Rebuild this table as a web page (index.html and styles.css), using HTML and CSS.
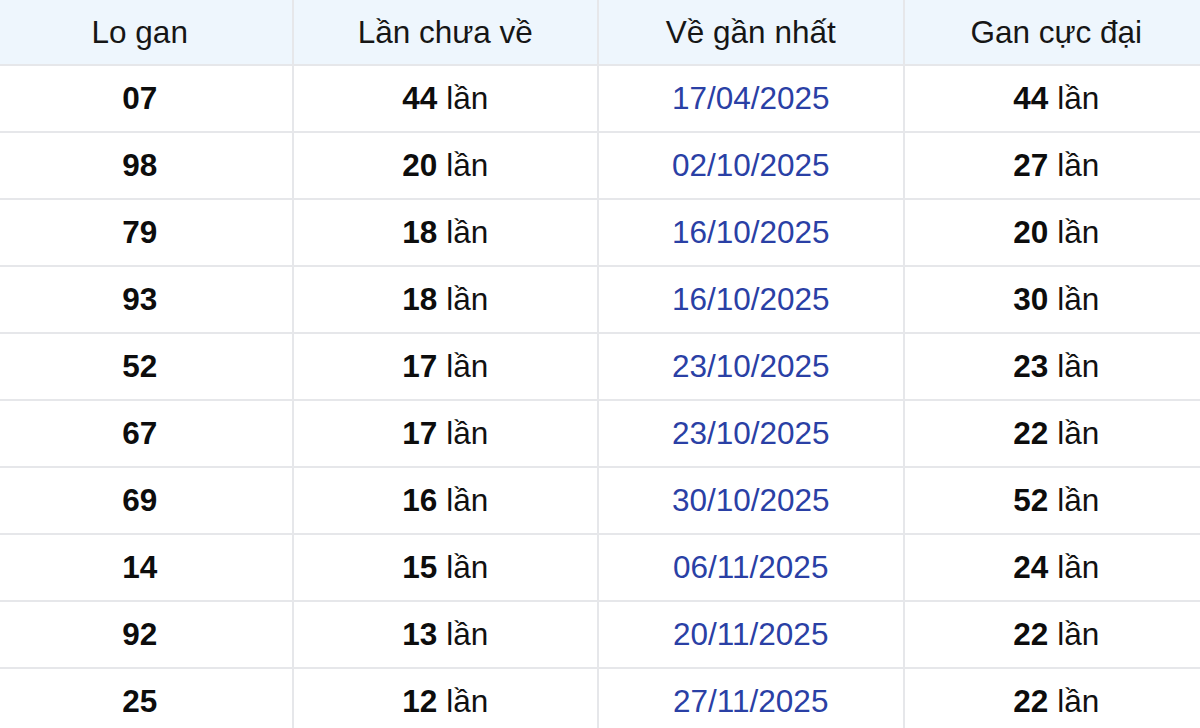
FILE: index.html
```html
<!DOCTYPE html>
<html lang="vi">
<head>
<meta charset="utf-8">
<title>Lo gan</title>
<link rel="stylesheet" href="styles.css">
</head>
<body>
<table class="gan-table">
  <thead>
    <tr>
      <th>Lo gan</th>
      <th>Lần chưa về</th>
      <th>Về gần nhất</th>
      <th>Gan cực đại</th>
    </tr>
  </thead>
  <tbody>
    <tr><td class="num">07</td><td><b>44</b> lần</td><td class="date">17/04/2025</td><td><b>44</b> lần</td></tr>
    <tr><td class="num">98</td><td><b>20</b> lần</td><td class="date">02/10/2025</td><td><b>27</b> lần</td></tr>
    <tr><td class="num">79</td><td><b>18</b> lần</td><td class="date">16/10/2025</td><td><b>20</b> lần</td></tr>
    <tr><td class="num">93</td><td><b>18</b> lần</td><td class="date">16/10/2025</td><td><b>30</b> lần</td></tr>
    <tr><td class="num">52</td><td><b>17</b> lần</td><td class="date">23/10/2025</td><td><b>23</b> lần</td></tr>
    <tr><td class="num">67</td><td><b>17</b> lần</td><td class="date">23/10/2025</td><td><b>22</b> lần</td></tr>
    <tr><td class="num">69</td><td><b>16</b> lần</td><td class="date">30/10/2025</td><td><b>52</b> lần</td></tr>
    <tr><td class="num">14</td><td><b>15</b> lần</td><td class="date">06/11/2025</td><td><b>24</b> lần</td></tr>
    <tr><td class="num">92</td><td><b>13</b> lần</td><td class="date">20/11/2025</td><td><b>22</b> lần</td></tr>
    <tr><td class="num">25</td><td><b>12</b> lần</td><td class="date">27/11/2025</td><td><b>22</b> lần</td></tr>
  </tbody>
</table>
</body>
</html>
```
FILE: styles.css
```css
html, body {
  margin: 0;
  padding: 0;
  overflow: hidden;
  background: #ffffff;
}

body {
  font-family: "Liberation Sans", Arial, sans-serif;
  color: #111111;
}

.gan-table {
  width: 1224px;
  margin-left: -14px;
  border-collapse: collapse;
  table-layout: fixed;
  font-size: 31.5px;
}

.gan-table th,
.gan-table td {
  text-align: center;
  vertical-align: middle;
  border: 2px solid #e6e7ea;
  padding: 0;
}

.gan-table thead tr {
  height: 65px;
}

.gan-table th {
  background: #eef6fd;
  font-weight: normal;
  color: #161616;
  border-top: none;
}

.gan-table tbody tr {
  height: 67px;
}

.gan-table td b,
.gan-table td.num {
  font-weight: bold;
  color: #0d0d0d;
}

.gan-table td.date {
  color: #2a40a5;
}
```
